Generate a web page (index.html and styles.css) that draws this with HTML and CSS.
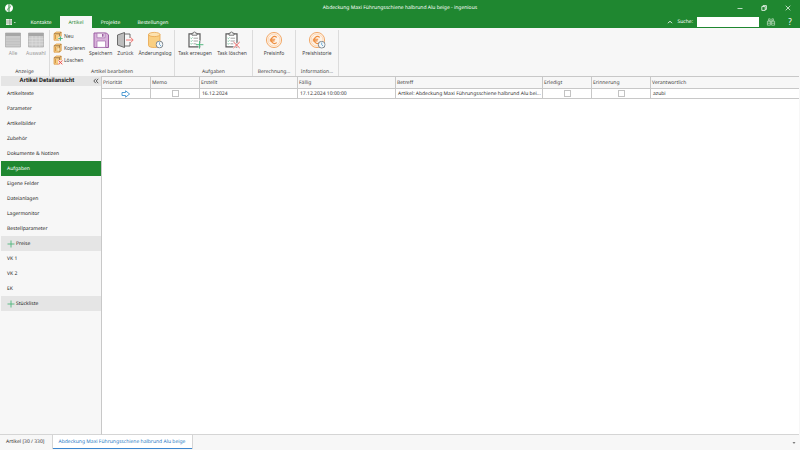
FILE: index.html
```html
<!DOCTYPE html>
<html lang="de">
<head>
<meta charset="utf-8">
<title>Abdeckung Maxi Führungsschiene halbrund Alu beige - ingenious</title>
<link rel="stylesheet" href="styles.css">
</head>
<body>
<svg class="defs" aria-hidden="true">
  <symbol id="plus" viewBox="0 0 8 8"><path d="M4 0.5v7M0.5 4h7" stroke="#4fb47c" stroke-width="0.9" fill="none"/></symbol>
  <symbol id="book" viewBox="0 0 10 10"><path d="M1 2.6 3.4 1h4.8v6.6L6.6 9.2H1z" fill="#f7cf86" stroke="#d9923a" stroke-width="0.7"/><path d="M1.2 2.8h5.4v6.2M6.6 2.8 8 1.2" stroke="#8a6237" stroke-width="0.8" fill="none"/><path d="M2.4 4v4" stroke="#c07a2d" stroke-width="0.7"/></symbol>
  <symbol id="clip" viewBox="0 0 18 18"><path d="M3 2.8h11v13H3z" fill="#fff" stroke="#5b5b5b" stroke-width="1.2"/><path d="M6 4.2V2.2h1.3a1.2 1.2 0 0 1 2.4 0H11v2z" fill="#f7f7f7" stroke="#5b5b5b" stroke-width="0.8"/><path d="M7.5 7.2h4.6M7.5 10h4.6M7.5 12.8h3" stroke="#8b8b8b" stroke-width="0.8"/><path d="m4.6 7 .7.7 1.2-1.3M4.6 9.8l.7.7 1.2-1.3M4.6 12.6l.7.7 1.2-1.3" fill="none" stroke="#49b07c" stroke-width="0.7"/></symbol>
  <symbol id="euro" viewBox="0 0 18 18"><circle cx="9" cy="9" r="7.6" fill="#fef3e7" stroke="#f1a15c" stroke-width="0.9"/><circle cx="9" cy="9" r="6" fill="none" stroke="#f6bd8a" stroke-width="0.5"/><path d="M11.8 6.4A3.4 3.4 0 1 0 11.8 11.6M4.8 8.2h5.4M4.8 9.9h4.8" fill="none" stroke="#ee8c3c" stroke-width="1.1"/></symbol>
  <symbol id="clock" viewBox="0 0 8 8"><circle cx="4" cy="4" r="3.4" fill="#f4f8fa" stroke="#666f77" stroke-width="0.8"/><path d="M4 1.8V4l1.5 1.5" fill="none" stroke="#3d8fc7" stroke-width="0.7"/></symbol>
</svg>

<header class="top">
  <div class="titlebar">
    <svg class="logo" viewBox="0 0 10 10"><path d="M4.5.9v8.2C2.2 8.9 1 7.2 1 5.2 1 3 2.3 1.2 4.5.9zM5.5.9v8.2C7.8 8.8 9 7 9 4.8 9 2.8 7.8 1.1 5.5.9z" fill="#fff"/><path d="m3 7.6 1.5-2.8M5.5 5.2 7 2.4" stroke="#1f8730" stroke-width="0.6"/></svg>
    <h1 class="title">Abdeckung Maxi Führungsschiene halbrund Alu beige - ingenious</h1>
    <div class="window-controls">
      <button aria-label="Minimieren"><svg viewBox="0 0 8 8"><path d="M1.5 4.5h5" stroke="#fff" stroke-width="0.7"/></svg></button>
      <button aria-label="Wiederherstellen"><svg viewBox="0 0 8 8"><path d="M1.8 2.6h3.4v3.8H1.8zM3 2.6v-1h3.4v3.8H5.2" fill="none" stroke="#fff" stroke-width="0.8"/></svg></button>
      <button aria-label="Schließen"><svg viewBox="0 0 8 8"><path d="m1.7 1.7 4.6 4.6M6.3 1.7 1.7 6.3" stroke="#fff" stroke-width="0.7"/></svg></button>
    </div>
  </div>
  <nav class="menubar">
    <button class="app-menu" aria-label="Menü"><svg viewBox="0 0 10 8"><path d="M0 1h6v6H0z" fill="#e3edde"/><path d="M0 3h6M0 5h6M3.8 1v6" stroke="#64756a" stroke-width="0.5"/><path d="M7.8 4h2l-1 1z" fill="#fff"/></svg></button>
    <a href="#" class="tab">Kontakte</a>
    <a href="#" class="tab active">Artikel</a>
    <a href="#" class="tab">Projekte</a>
    <a href="#" class="tab">Bestellungen</a>
    <div class="search">
      <button aria-label="Menüband einklappen"><svg viewBox="0 0 8 8"><path d="M2 5.2 4 3.2l2 2" fill="none" stroke="#fff" stroke-width="0.9"/></svg></button>
      <label for="suche">Suche:</label>
      <input id="suche" type="text">
      <button class="find" aria-label="Suchen"><svg viewBox="0 0 10 8"><path d="M2.6.8h1.6v2H2.6zM5.8.8h1.6v2H5.8zM1.4 3.2h3v4h-3zM5.6 3.2h3v4h-3zM4.4 3.8h1.2M1.4 5.2h3M5.6 5.2h3" fill="none" stroke="#d9ecd9" stroke-width="0.6"/></svg></button>
      <button class="help" aria-label="Hilfe">?</button>
    </div>
  </nav>
</header>

<section class="ribbon">
  <div class="group anzeige">
    <div class="tools">
      <button class="tool" disabled><svg viewBox="0 0 18 18"><path d="M1.5 2h15v14h-15z" fill="#cbcbcb" stroke="#a8a8a8" stroke-width="0.7"/><path d="M1.5 2h15v3h-15z" fill="#a6a6a6"/><path d="M1.5 8h15M1.5 10.7h15M1.5 13.4h15" stroke="#b7b7b7" stroke-width="0.5"/></svg>Alle</button>
      <button class="tool" disabled><svg viewBox="0 0 18 18"><path d="M1.5 2h15v14h-15z" fill="#cbcbcb" stroke="#a8a8a8" stroke-width="0.7"/><path d="M1.5 2h15v3h-15z" fill="#a6a6a6"/><path d="M1.5 7.7h15M1.5 10.4h15M1.5 13.2h15M5.2 5v11M9 5v11M12.8 5v11" stroke="#e3e3e3" stroke-width="0.5"/></svg>Auswahl</button>
    </div>
    <div class="caption">Anzeige</div>
  </div>
  <div class="group bearbeiten">
    <div class="tools">
      <div class="stack">
        <button><svg viewBox="0 0 10 10"><use href="#book"/><path d="M7.5 5v5M5 7.5h5" stroke="#f7f7f7" stroke-width="2"/><path d="M7.5 5.3v4.4M5.3 7.5h4.4" stroke="#43b077" stroke-width="0.9"/></svg>Neu</button>
        <button><svg viewBox="0 0 10 10"><use href="#book"/><path d="M4 4.8h2.8v3.4H4z" fill="#fbe7bb" stroke="#c9903f" stroke-width="0.4"/></svg>Kopieren</button>
        <button><svg viewBox="0 0 10 10"><use href="#book"/><path d="M5 5h4.6v4.6H5z" fill="#fbe7df"/><path d="m5.5 5.5 3.8 3.8M9.3 5.5 5.5 9.3" stroke="#e5484a" stroke-width="0.9"/></svg>Löschen</button>
      </div>
      <button class="tool"><svg viewBox="0 0 18 18"><path d="M2 2h12.5L16.5 4v12.5H2z" fill="#d8b1da" stroke="#9c5fa3" stroke-width="1"/><path d="M5 2.2h8v4.6H5z" fill="#f6eef6" stroke="#a56fac" stroke-width="0.7"/><path d="M10 3h1.6v2.8H10z" fill="#9c5fa3"/><path d="M5 10h8.5v6.4H5z" fill="#fff" stroke="#a56fac" stroke-width="0.7"/></svg>Speichern</button>
      <button class="tool"><svg viewBox="0 0 18 18"><path d="M8.5 3H14v12H8.5" fill="#f7f7f7" stroke="#606060" stroke-width="0.9"/><path d="M1.5 4 8.5 1.5v15L1.5 14z" fill="#bdbdbd" stroke="#606060" stroke-width="0.9"/><path d="M10 7h5v4h-5z" fill="#f7f7f7"/><path d="M10 9h7M14.5 6.3 17.2 9l-2.7 2.7" fill="none" stroke="#ef6a66" stroke-width="0.9"/></svg>Zurück</button>
      <button class="tool"><svg viewBox="0 0 18 18"><path d="M2.5 3.5v11c0 2.7 11.5 2.7 11.5 0v-11z" fill="#f9cf82" stroke="#e9a64d" stroke-width="0.8"/><ellipse cx="8.25" cy="3.5" rx="5.75" ry="2.1" fill="#fce2b0" stroke="#e9a64d" stroke-width="0.8"/><use href="#clock" x="9.5" y="9.5" width="8" height="8"/></svg>Änderungslog</button>
    </div>
    <div class="caption">Artikel bearbeiten</div>
  </div>
  <div class="group aufgaben">
    <div class="tools">
      <button class="tool"><svg viewBox="0 0 18 18"><use href="#clip"/><path d="M13.5 9.5v8M9.8 13.5h7.8" stroke="#f7f7f7" stroke-width="2"/><path d="M13.5 10v7.6M9.8 13.7h7.6" stroke="#3fb174" stroke-width="0.9"/></svg>Task erzeugen</button>
      <button class="tool"><svg viewBox="0 0 18 18"><use href="#clip"/><path d="m10.5 11 6.2 6M16.7 11l-6.2 6" stroke="#f7f7f7" stroke-width="2.2"/><path d="m10.5 11 6.2 6M16.7 11l-6.2 6" stroke="#e8504f" stroke-width="0.9"/></svg>Task löschen</button>
    </div>
    <div class="caption">Aufgaben</div>
  </div>
  <div class="group preis">
    <div class="tools"><button class="tool"><svg viewBox="0 0 18 18"><use href="#euro"/></svg>Preisinfo</button></div>
    <div class="caption">Berechnung...</div>
  </div>
  <div class="group preis">
    <div class="tools"><button class="tool"><svg viewBox="0 0 18 18"><use href="#euro"/><use href="#clock" x="9.7" y="9.7" width="8" height="8"/></svg>Preishistorie</button></div>
    <div class="caption">Information...</div>
  </div>
</section>

<main class="work">
  <aside class="sidebar">
    <header class="side-head"><h2>Artikel Detailansicht</h2><button aria-label="Einklappen"><svg viewBox="0 0 6 6"><path d="M2.8.8.8 3l2 2.2M5.2.8l-2 2.2 2 2.2" fill="none" stroke="#333" stroke-width="0.8"/></svg></button></header>
    <nav>
      <a href="#">Artikeltexte</a>
      <a href="#">Parameter</a>
      <a href="#">Artikelbilder</a>
      <a href="#">Zubehör</a>
      <a href="#">Dokumente &amp; Notizen</a>
      <a href="#" class="selected">Aufgaben</a>
      <a href="#">Eigene Felder</a>
      <a href="#">Dateianlagen</a>
      <a href="#">Lagermonitor</a>
      <a href="#">Bestellparameter</a>
      <a href="#" class="section"><svg><use href="#plus"/></svg>Preise</a>
      <a href="#">VK 1</a>
      <a href="#">VK 2</a>
      <a href="#">EK</a>
      <a href="#" class="section"><svg><use href="#plus"/></svg>Stückliste</a>
    </nav>
  </aside>
  <div class="content">
    <table>
      <colgroup><col class="c-prio"><col class="c-memo"><col class="c-date"><col class="c-date"><col class="c-subject"><col class="c-done"><col class="c-remind"><col></colgroup>
      <thead><tr><th>Priorität</th><th>Memo</th><th>Erstellt</th><th>Fällig</th><th>Betreff</th><th>Erledigt</th><th>Erinnerung</th><th>Verantwortlich</th></tr></thead>
      <tbody><tr>
        <td class="mid"><svg class="arrow" viewBox="0 0 10 8"><path d="M1 2.5h3.6V.8L8.6 4 4.6 7.2V5.5H1z" fill="#fff" stroke="#3f93cf" stroke-width="0.9"/></svg></td>
        <td class="mid"><input type="checkbox" aria-label="Memo"></td>
        <td>16.12.2024</td>
        <td>17.12.2024 10:00:00</td>
        <td>Artikel: Abdeckung Maxi Führungsschiene halbrund Alu bei...</td>
        <td class="mid"><input type="checkbox" aria-label="Erledigt"></td>
        <td class="mid"><input type="checkbox" aria-label="Erinnerung"></td>
        <td>azubi</td>
      </tr></tbody>
    </table>
  </div>
</main>

<footer class="doc-tabs">
  <a href="#">Artikel [30 / 330]</a>
  <a href="#" class="current">Abdeckung Maxi Führungsschiene halbrund Alu beige</a>
  <button aria-label="Weitere Tabs"><svg viewBox="0 0 4 4"><path d="M.5 1.2h3L2 2.8z" fill="#555"/></svg></button>
</footer>
</body>
</html>
```
FILE: styles.css
```css
* { box-sizing: border-box; }
body {
  margin: 0;
  height: 100vh;
  display: flex;
  flex-direction: column;
  background: #f7f7f7;
  color: #333;
  font: 5px/8px "Noto Sans", "DejaVu Sans Condensed", sans-serif;
  text-rendering: geometricPrecision;
}
button { border: 0; padding: 0; background: none; color: inherit; font: inherit; }
a { color: inherit; text-decoration: none; }
h1, h2 { margin: 0; font: inherit; }
svg { display: block; flex: none; }
.defs { position: absolute; width: 0; height: 0; }

.top { background: #1f8730; color: #fff; }
.titlebar { display: grid; grid-template-columns: 1fr auto 1fr; align-items: center; height: 16px; padding: 0 4px; }
.logo { width: 10px; height: 10px; }
.window-controls { display: flex; justify-content: flex-end; gap: 16px; padding-right: 4px; }
.window-controls svg, .search svg { width: 8px; height: 8px; }
.menubar { display: flex; height: 12px; }
.app-menu { width: 22px; padding-left: 6px; }
.app-menu svg { width: 10px; height: 8px; }
.tab { display: flex; justify-content: center; width: 38px; padding-top: 3px; }
.tab.active { width: 32px; background: #f7f7f7; color: #1f8730; }
.tab:nth-of-type(3) { width: 37px; }
.tab:nth-of-type(4) { width: 48px; }
.search { display: flex; align-items: center; margin-left: auto; padding-right: 7px; }
.search label { margin: 0 4px 0 4px; }
.search input { width: 62px; height: 10px; border: 0; padding: 0 2px; background: #fff; font: inherit; }
.search .find { margin-left: 7px; }
.search .find svg { width: 10px; }
.search .help { margin-left: 11px; font-size: 8px; width: 6px; }

.ribbon { display: flex; height: 48px; padding: 2px 0 0; }
.group { display: flex; flex-direction: column; justify-content: space-between; border-right: 1px solid #dcdcdc; }
.anzeige { width: 50px; }
.bearbeiten { width: 125px; }
.aufgaben { width: 78px; }
.preis { width: 43px; }
.tools { display: flex; justify-content: center; }
.caption { text-align: center; color: #444; }
.tool { display: flex; flex-direction: column; align-items: center; padding: 1px 2px 0; color: #444; white-space: nowrap; }
.tool svg { width: 18px; height: 18px; }
.tool:disabled { color: #999; }
.anzeige .tool { width: 23px; }
.aufgaben .tool { width: 37px; }
.stack { width: 34px; }
.stack button { display: flex; align-items: center; gap: 1px; height: 12px; color: #444; }
.stack svg { width: 10px; height: 10px; }
.bearbeiten .tools { justify-content: flex-start; padding-left: 3px; }

.work { flex: 1; display: flex; min-height: 0; }
.sidebar { width: 102px; padding-left: 1px; border-right: 1px solid #c8c8c8; border-bottom: 1px solid #d5d5d5; }
.side-head { display: flex; align-items: center; height: 10px; padding-right: 2px; background: #e5e5e5; }
.side-head h2 { flex: 1; text-align: center; font-family: Roboto, sans-serif; font-weight: bold; font-size: 6px; color: #222; }
.side-head svg { width: 6px; height: 6px; }
.sidebar nav a { display: flex; align-items: center; height: 15px; padding-left: 6px; color: #222; }
.sidebar nav svg { width: 8px; height: 8px; margin-right: 1px; }
.sidebar nav .section { background: #e5e5e5; }
.sidebar nav .selected { background: #1f8730; color: #fff; }
.content { flex: 1; min-width: 0; margin-right: 1px; background: #fff; border-top: 1px solid #c8c8c8; border-bottom: 1px solid #d5d5d5; }
table { width: 100%; table-layout: fixed; border-collapse: separate; border-spacing: 0; }
.c-prio, .c-memo, .c-done { width: 49px; }
.c-date { width: 98px; }
.c-subject { width: 147px; }
.c-remind { width: 59px; }
th, td { padding: 0 1px; height: 12px; border: 1px solid #c8c8c8; border-width: 0 1px 1px 0; text-align: left; font-weight: normal; white-space: nowrap; overflow: hidden; }
th { background: #f7f7f7; color: #444; }
td { height: 10px; padding-left: 2px; }
td.mid { padding: 0; }
th:last-child, td:last-child { border-right: 0; }
.mid input { appearance: none; display: block; width: 7px; height: 7px; margin: 0 auto; border: 1px solid #c3c3c3; background: #fff; }
.arrow { width: 10px; height: 8px; margin: 0 auto; }

.doc-tabs { display: flex; height: 15px; }
.doc-tabs a { display: flex; align-items: center; height: 14px; padding: 0 7px 0 6px; white-space: nowrap; }
.doc-tabs .current { border: 1px solid #d5d5d5; border-width: 0 1px; box-shadow: inset 0 -1px #3d87d0; color: #2b7bc4; background: #fff; }
.doc-tabs button { margin: 0 4px 0 auto; }
.doc-tabs svg { width: 4px; height: 4px; }
```
